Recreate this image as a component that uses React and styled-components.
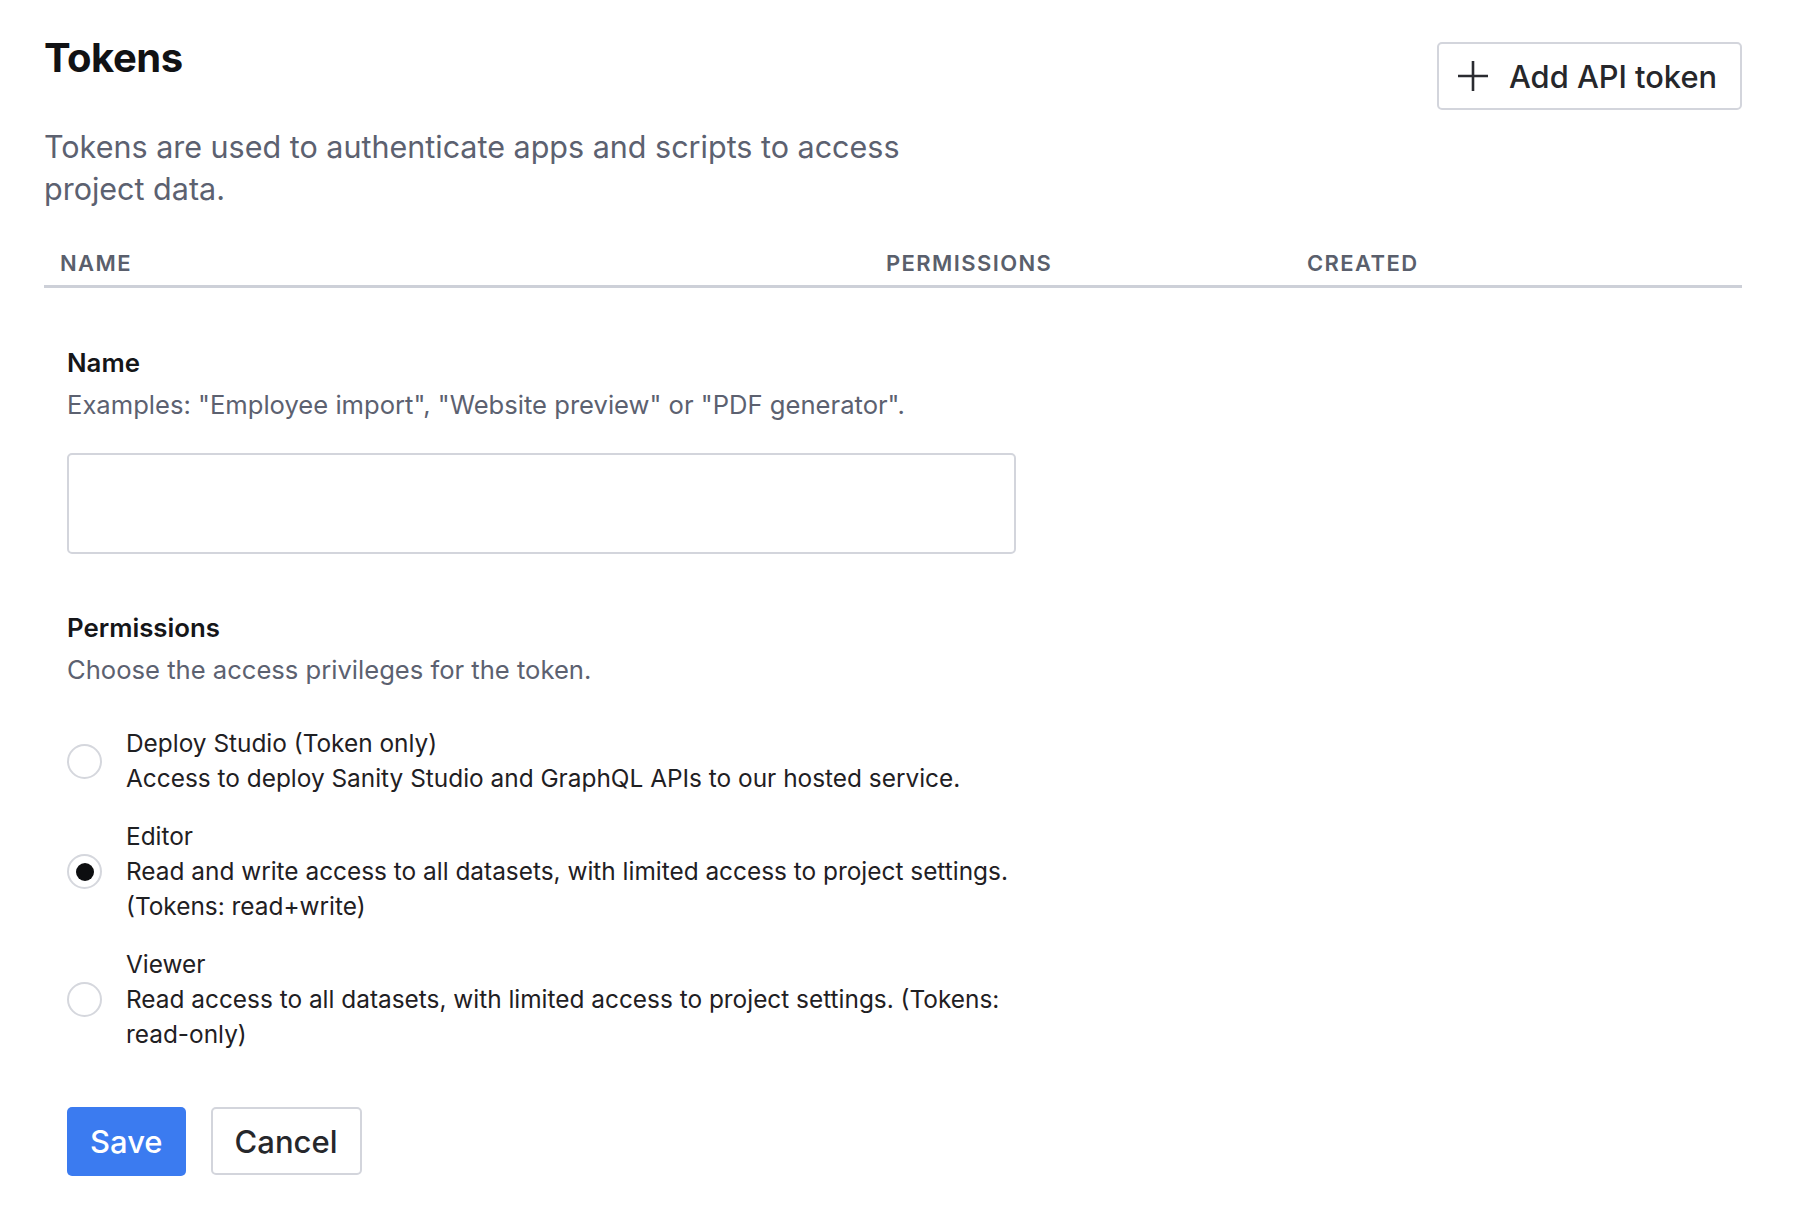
import React, { useState } from "react";
import styled, { createGlobalStyle } from "styled-components";

const Global = createGlobalStyle`
  * { box-sizing: border-box; }
  body {
    margin: 0;
    background: #ffffff;
    font-family: Inter, "Noto Sans", "Liberation Sans", sans-serif;
    color: #1f2023;
    -webkit-font-smoothing: antialiased;
  }
`;

const Page = styled.div`
  width: 1698px;
  margin-left: 44px;
  padding-top: 34px;
`;

const HeaderRow = styled.div`
  display: flex;
  justify-content: space-between;
  align-items: flex-start;
`;

const Title = styled.h1`
  margin: 0;
  font-size: 40px;
  line-height: 48px;
  font-weight: 700;
  letter-spacing: -0.5px;
  color: #111214;
`;

const OutlineButton = styled.button`
  display: inline-flex;
  align-items: center;
  gap: ${(p) => (p.$icon ? "20px" : "0")};
  height: 68px;
  padding: ${(p) => (p.$icon ? "0 23px 0 18px" : "0 22px")};
  margin-top: ${(p) => p.$mt || "0"};
  background: #ffffff;
  border: 2px solid #d3d5dc;
  border-radius: 5px;
  font-family: inherit;
  font-size: ${(p) => (p.$icon ? "30.8px" : "31px")};
  font-weight: 500;
  color: #26272b;
  cursor: pointer;
`;

const PrimaryButton = styled.button`
  height: 69px;
  padding: 0 23px;
  background: #3b7bf0;
  border: none;
  border-radius: 5px;
  font-family: inherit;
  font-size: 31px;
  font-weight: 500;
  color: #ffffff;
  cursor: pointer;
`;

const Description = styled.p`
  margin: 16px 0 0;
  max-width: 920px;
  font-size: 30.5px;
  line-height: 42px;
  color: #5c6170;
`;

const TableHead = styled.div`
  display: grid;
  grid-template-columns: 826px 421px 1fr;
  margin-top: 38px;
  border-bottom: 3px solid #cdd0d8;
`;

const HeadCell = styled.div`
  padding: 0 16px 7px;
  font-size: 22px;
  line-height: 30px;
  font-weight: 600;
  letter-spacing: 1.4px;
  text-transform: uppercase;
  color: #5a5f6c;
`;

const Form = styled.form`
  width: 972px;
  padding: 59px 0 0 23px;
  display: flex;
  flex-direction: column;
`;

const FieldLabel = styled.div`
  font-size: 25.8px;
  line-height: 32px;
  font-weight: 600;
  color: #151619;
`;

const HelpText = styled.div`
  margin-top: 10px;
  font-size: 25.6px;
  line-height: 32px;
  color: #5c6170;
`;

const TextInput = styled.input`
  margin-top: 32px;
  width: 949px;
  height: 101px;
  border: 2px solid #d3d5dc;
  border-radius: 5px;
  padding: 0 20px;
  font-family: inherit;
  font-size: 26px;
  outline: none;
`;

const SectionLabel = styled(FieldLabel)`
  margin-top: 58px;
`;

const OptionList = styled.div`
  margin-top: 40px;
  display: flex;
  flex-direction: column;
  gap: 23px;
`;

const Option = styled.label`
  display: flex;
  align-items: center;
  gap: 24px;
  cursor: pointer;
`;

const RadioCircle = styled.span`
  flex: 0 0 auto;
  width: 35px;
  height: 35px;
  border-radius: 50%;
  border: 2px solid #d5d7dd;
  display: flex;
  align-items: center;
  justify-content: center;
  background: #ffffff;
  &::after {
    content: "";
    width: 18px;
    height: 18px;
    border-radius: 50%;
    background: #0d0e10;
    display: ${(p) => (p.$checked ? "block" : "none")};
  }
`;

const OptionText = styled.div`
  width: 891px;
  font-size: 24.4px;
  line-height: 35px;
  color: #1f2023;
`;

const Actions = styled.div`
  margin-top: 55px;
  display: flex;
  gap: 25px;
`;

const PlusIcon = () => (
  <svg width="32" height="32" viewBox="0 0 32 32" fill="none">
    <path d="M16 1v30M1 16h30" stroke="#2a2b30" strokeWidth="2.6" strokeLinecap="butt" />
  </svg>
);

const options = [
  {
    id: "deploy",
    title: "Deploy Studio (Token only)",
    desc: "Access to deploy Sanity Studio and GraphQL APIs to our hosted service.",
  },
  {
    id: "editor",
    title: "Editor",
    desc: "Read and write access to all datasets, with limited access to project settings. (Tokens: read+write)",
  },
  {
    id: "viewer",
    title: "Viewer",
    desc: "Read access to all datasets, with limited access to project settings. (Tokens: read-only)",
  },
];

export default function App() {
  const [selected, setSelected] = useState("editor");
  return (
    <>
      <Global />
      <Page>
        <HeaderRow>
          <Title>Tokens</Title>
          <OutlineButton $icon $mt="8px" type="button">
            <PlusIcon />
            Add API token
          </OutlineButton>
        </HeaderRow>
        <Description>
          Tokens are used to authenticate apps and scripts to access project data.
        </Description>
        <TableHead>
          <HeadCell>Name</HeadCell>
          <HeadCell>Permissions</HeadCell>
          <HeadCell>Created</HeadCell>
        </TableHead>
        <Form onSubmit={(e) => e.preventDefault()}>
          <FieldLabel>Name</FieldLabel>
          <HelpText>Examples: "Employee import", "Website preview" or "PDF generator".</HelpText>
          <TextInput type="text" />
          <SectionLabel>Permissions</SectionLabel>
          <HelpText>Choose the access privileges for the token.</HelpText>
          <OptionList>
            {options.map((o) => (
              <Option key={o.id} onClick={() => setSelected(o.id)}>
                <RadioCircle $checked={selected === o.id} />
                <OptionText>
                  {o.title}
                  <br />
                  {o.desc}
                </OptionText>
              </Option>
            ))}
          </OptionList>
          <Actions>
            <PrimaryButton type="submit">Save</PrimaryButton>
            <OutlineButton type="button">Cancel</OutlineButton>
          </Actions>
        </Form>
      </Page>
    </>
  );
}
